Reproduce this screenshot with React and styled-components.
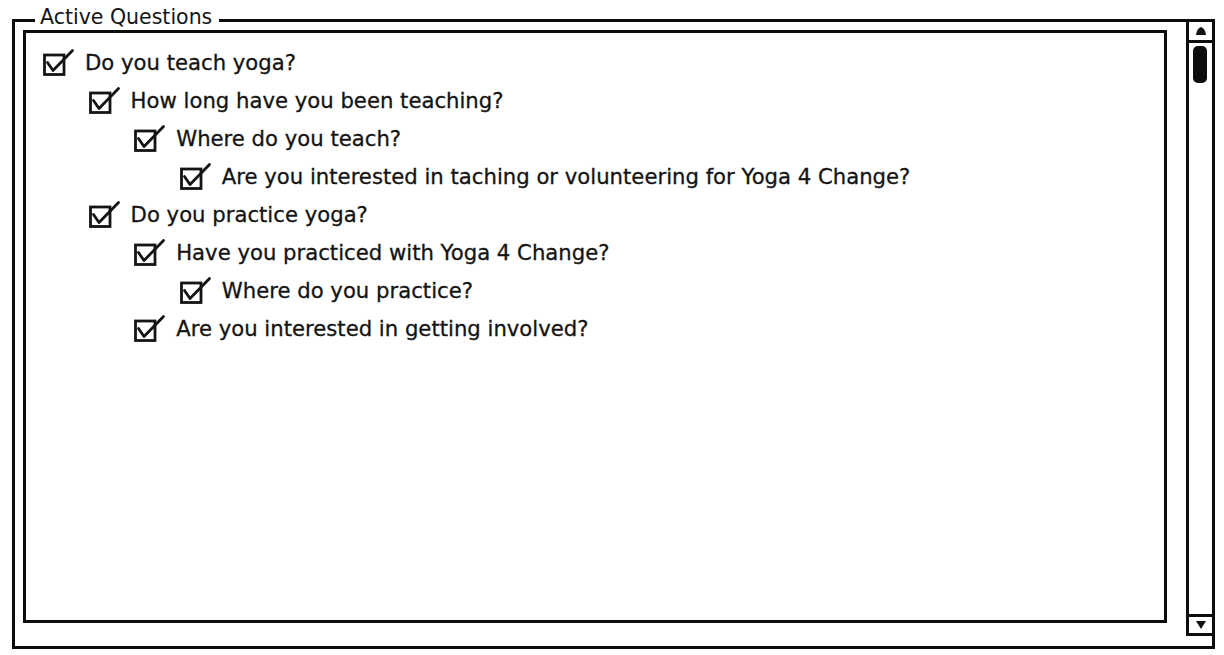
import React from "react";
import styled, { createGlobalStyle } from "styled-components";

const questions = [
  { level: 0, text: "Do you teach yoga?" },
  { level: 1, text: "How long have you been teaching?" },
  { level: 2, text: "Where do you teach?" },
  { level: 3, text: "Are you interested in taching or volunteering for Yoga 4 Change?" },
  { level: 1, text: "Do you practice yoga?" },
  { level: 2, text: "Have you practiced with Yoga 4 Change?" },
  { level: 3, text: "Where do you practice?" },
  { level: 2, text: "Are you interested in getting involved?" },
];

const Global = createGlobalStyle`
  html, body {
    margin: 0;
    padding: 0;
    background: #fff;
  }
  body {
    font-family: "DejaVu Sans", "Liberation Sans", sans-serif;
    color: #111;
  }
`;

const Page = styled.div`
  width: 1224px;
  height: 655px;
  padding: 19px 9px 0 12px;
  box-sizing: border-box;
`;

const Frame = styled.div`
  position: relative;
  display: flex;
  height: 630px;
  box-sizing: border-box;
  border: 3px solid #0d0d0d;
`;

const Legend = styled.div`
  position: absolute;
  top: -18px;
  left: 20px;
  padding: 0 7px 0 5px;
  background: #fff;
  font-size: 20.5px;
  line-height: 26px;
  color: #141414;
`;

const Panel = styled.div`
  flex: 1;
  margin: 8px 0 23px 8px;
  border: 3px solid #0d0d0d;
  padding: 10px 0 0 17px;
`;

const Row = styled.div`
  display: flex;
  align-items: center;
  height: 38px;
  padding-left: ${(p) => p.$level * 45.6}px;
`;

const Label = styled.span`
  font-size: 21.2px;
  margin-left: 10px;
  white-space: nowrap;
  color: #141414;
  -webkit-text-stroke: 0.3px #141414;
`;

const Scrollbar = styled.div`
  display: flex;
  flex-direction: column;
  width: 29px;
  box-sizing: border-box;
  margin: -3px -3px 10px 19px;
  border: 3px solid #0d0d0d;
`;

const ArrowBox = styled.div`
  display: flex;
  align-items: center;
  justify-content: center;
  height: ${(p) => p.$h}px;
  border-${(p) => (p.$up ? "bottom" : "top")}: 3px solid #0d0d0d;
`;

const Track = styled.div`
  flex: 1;
  padding: 3px 4px 0 4px;
`;

const Thumb = styled.div`
  width: 14px;
  height: 37px;
  border-radius: 5px;
  background: #0d0d0d;
`;

const Check = () => (
  <svg width="32" height="28" viewBox="0 0 32 28">
    <rect x="1.5" y="7" width="19.5" height="19.5" fill="none" stroke="#141414" strokeWidth="2.8" />
    <path d="M4.5 14.5 L10 22.5 L29.5 2.5" fill="none" stroke="#141414" strokeWidth="2.8" strokeLinejoin="round" strokeLinecap="round" />
  </svg>
);

const Arrow = ({ up }) => (
  <svg width="12" height="8" viewBox="0 0 12 8">
    {up ? <path d="M1 8 Q2 1 6 0 Q10 1 11 8 Z" fill="#111" /> : <path d="M1 0 L11 0 L6 8 Z" fill="#111" />}
  </svg>
);

export default function App() {
  return (
    <Page>
      <Global />
      <Frame>
        <Legend>Active Questions</Legend>
        <Panel>
          {questions.map((q, i) => (
            <Row key={i} $level={q.level}>
              <Check />
              <Label>{q.text}</Label>
            </Row>
          ))}
        </Panel>
        <Scrollbar>
          <ArrowBox $up $h={18}>
            <Arrow up />
          </ArrowBox>
          <Track>
            <Thumb />
          </Track>
          <ArrowBox $h={16}>
            <Arrow />
          </ArrowBox>
        </Scrollbar>
      </Frame>
    </Page>
  );
}
